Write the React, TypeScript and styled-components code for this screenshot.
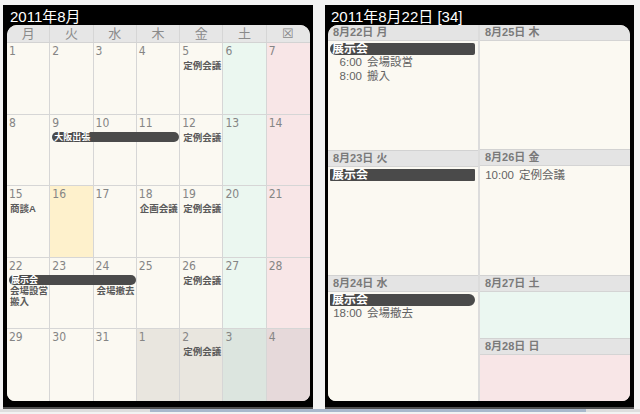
import React from "react";
import styled, { createGlobalStyle } from "styled-components";

const GlobalStyle = createGlobalStyle`
  html, body {
    margin: 0;
    padding: 0;
    background: #f3f3f3;
  }
  body {
    font-family: "Liberation Sans", "Noto Sans CJK JP", sans-serif;
  }
`;

const CJK = `"Liberation Sans", "Noto Sans CJK JP", sans-serif`;
const NUM = `"Liberation Sans Narrow", "DejaVu Sans Condensed", "Liberation Sans", sans-serif`;

const cream = "#fbf9f2";

const Screen = styled.div`
  width: 640px;
  height: 414px;
  display: flex;
  flex-direction: column;
  overflow: hidden;
`;

const Panels = styled.div`
  display: flex;
  gap: 12px;
  padding: 5px 6px 0 3px;
`;

const Panel = styled.section<{ $w: number; $left: number; $right: number }>`
  width: ${(p) => p.$w}px;
  height: 404px;
  box-sizing: border-box;
  background: #000;
  padding: 0 ${(p) => p.$right}px 6px ${(p) => p.$left}px;
  border-bottom: 2px solid #505050;
  display: flex;
  flex-direction: column;
`;

const Title = styled.h1`
  margin: 0;
  height: 20px;
  box-sizing: border-box;
  padding: 3px 0 0 3px;
  line-height: 17px;
  font-size: 15px;
  font-weight: normal;
  color: #fff;
  font-family: ${CJK};
  white-space: nowrap;
`;

const Sheet = styled.div`
  flex: 1;
  background: ${cream};
  border-radius: 10px 10px 8px 8px;
  overflow: hidden;
  display: flex;
  flex-direction: column;
`;

/* ---------- month view ---------- */

const WeekHeader = styled.div`
  display: grid;
  grid-template-columns: repeat(7, 1fr);
  height: 18px;
  background: #e6e6e6;
  border-bottom: 1px solid #d3d3d3;
  box-sizing: border-box;
`;

const DayName = styled.div<{ $last?: boolean }>`
  text-align: center;
  font-size: 13px;
  line-height: 17px;
  color: #8a8a8a;
  font-family: ${CJK};
  border-right: ${(p) => (p.$last ? "none" : "1px solid #d6d6d6")};
`;

const Week = styled.div<{ $last?: boolean }>`
  display: grid;
  grid-template-columns: repeat(7, 1fr);
  grid-template-rows: 17px 10px auto 1fr;
  height: 72px;
  box-sizing: border-box;
  border-bottom: ${(p) => (p.$last ? "none" : "1px solid #d6d6d6")};
`;

const DayCell = styled.div<{ $col: number; $bg: string }>`
  grid-column: ${(p) => p.$col};
  grid-row: 1 / -1;
  background: ${(p) => p.$bg};
  border-right: ${(p) => (p.$col === 7 ? "none" : "1px solid #d6d6d6")};
`;

const DateNum = styled.div<{ $col: number }>`
  grid-column: ${(p) => p.$col};
  grid-row: 1;
  padding: 2px 0 0 2px;
  font-size: 12px;
  line-height: 12px;
  color: #858585;
  font-family: ${NUM};
`;

const Bar = styled.div<{ $col: number; $span: number }>`
  grid-column: ${(p) => p.$col} / span ${(p) => p.$span};
  grid-row: 2;
  height: 10px;
  margin: 0 1px 0 2px;
  padding-left: 2px;
  border-radius: 5px;
  background: #4b4b4b;
  color: #fff;
  font-size: 9px;
  font-weight: bold;
  line-height: 10px;
  font-family: ${CJK};
  white-space: nowrap;
`;

const Item = styled.div<{ $col: number; $row: number }>`
  grid-column: ${(p) => p.$col};
  grid-row: ${(p) => p.$row};
  padding-left: 3px;
  font-size: 9.5px;
  line-height: 11px;
  font-weight: bold;
  color: #5a5a5a;
  font-family: ${CJK};
  white-space: pre;
`;

type MonthEvent =
  | { kind: "bar"; col: number; span: number; text: string }
  | { kind: "item"; col: number; row: number; text: string };

const dayNames = ["月", "火", "水", "木", "金", "土", "☒"];

const weeks: number[][] = [
  [1, 2, 3, 4, 5, 6, 7],
  [8, 9, 10, 11, 12, 13, 14],
  [15, 16, 17, 18, 19, 20, 21],
  [22, 23, 24, 25, 26, 27, 28],
  [29, 30, 31, 1, 2, 3, 4],
];

const weekEvents: MonthEvent[][] = [
  [{ kind: "item", col: 5, row: 2, text: "定例会議" }],
  [
    { kind: "bar", col: 2, span: 3, text: "大阪出張" },
    { kind: "item", col: 5, row: 2, text: "定例会議" },
  ],
  [
    { kind: "item", col: 1, row: 2, text: "商談A" },
    { kind: "item", col: 4, row: 2, text: "企画会議" },
    { kind: "item", col: 5, row: 2, text: "定例会議" },
  ],
  [
    { kind: "bar", col: 1, span: 3, text: "展示会" },
    { kind: "item", col: 1, row: 3, text: "会場設営\n搬入" },
    { kind: "item", col: 3, row: 3, text: "会場撤去" },
    { kind: "item", col: 5, row: 2, text: "定例会議" },
  ],
  [{ kind: "item", col: 5, row: 2, text: "定例会議" }],
];

function cellColor(week: number, col: number, day: number) {
  const nextMonth = week === 4 && day < 10;
  if (week === 2 && day === 16) return "#fef1cc";
  if (col === 6) return nextMonth ? "#dce5df" : "#ebf7f0";
  if (col === 7) return nextMonth ? "#e6d9da" : "#f8e6e7";
  return nextMonth ? "#e9e6df" : cream;
}

function MonthView() {
  return (
    <Sheet>
      <WeekHeader>
        {dayNames.map((d, i) => (
          <DayName key={d} $last={i === 6}>
            {d}
          </DayName>
        ))}
      </WeekHeader>
      {weeks.map((days, w) => (
        <Week key={w} $last={w === weeks.length - 1}>
          {days.map((day, i) => (
            <DayCell key={`bg${i}`} $col={i + 1} $bg={cellColor(w, i + 1, day)} />
          ))}
          {days.map((day, i) => (
            <DateNum key={`n${i}`} $col={i + 1}>
              {day}
            </DateNum>
          ))}
          {weekEvents[w].map((ev, k) =>
            ev.kind === "bar" ? (
              <Bar key={k} $col={ev.col} $span={ev.span}>
                {ev.text}
              </Bar>
            ) : (
              <Item key={k} $col={ev.col} $row={ev.row}>
                {ev.text}
              </Item>
            )
          )}
        </Week>
      ))}
    </Sheet>
  );
}

/* ---------- week view ---------- */

const WeekBody = styled.div`
  flex: 1;
  display: flex;
`;

const DayColumn = styled.div<{ $divider?: boolean }>`
  flex: 1;
  display: flex;
  flex-direction: column;
  border-right: ${(p) => (p.$divider ? "2px solid #dcdcdc" : "none")};
`;

const Section = styled.div<{ $grow: number; $first?: boolean }>`
  flex: ${(p) => p.$grow} 1 0;
  display: flex;
  flex-direction: column;
  border-top: ${(p) => (p.$first ? "none" : "1px solid #d2d2d2")};
`;

const SectionHead = styled.div`
  height: 16px;
  box-sizing: border-box;
  background: #e4e4e4;
  border-bottom: 1px solid #d4d4d4;
  padding-left: 5px;
  font-size: 11px;
  line-height: 15px;
  font-weight: bold;
  color: #7a7a7a;
  font-family: ${CJK};
`;

const SectionBody = styled.div<{ $bg: string }>`
  flex: 1;
  background: ${(p) => p.$bg};
  padding-top: 2px;
`;

const DayBar = styled.div<{ $round: "left" | "right" | "none" }>`
  height: 12px;
  margin: 0 3px 0 2px;
  padding-left: 2px;
  background: #4a4a4a;
  color: #fff;
  font-size: 12px;
  line-height: 12px;
  font-weight: bold;
  font-family: ${CJK};
  border-radius: ${(p) =>
    p.$round === "left" ? "6px 2px 2px 6px" : p.$round === "right" ? "1px 6px 6px 1px" : "1px"};
`;

const Entry = styled.div`
  padding-left: 5px;
  font-size: 11.5px;
  line-height: 14px;
  color: #646464;
  font-family: ${CJK};
  white-space: nowrap;
`;

const Time = styled.span`
  display: inline-block;
  min-width: 29px;
  margin-right: 5px;
  text-align: right;
`;

type DayInfo = {
  label: string;
  grow: number;
  bg: string;
  bar?: { text: string; round: "left" | "right" | "none" };
  entries: { time: string; text: string }[];
};

const leftDays: DayInfo[] = [
  {
    label: "8月22日 月",
    grow: 1,
    bg: cream,
    bar: { text: "展示会", round: "left" },
    entries: [
      { time: "6:00", text: "会場設営" },
      { time: "8:00", text: "搬入" },
    ],
  },
  { label: "8月23日 火", grow: 1, bg: cream, bar: { text: "展示会", round: "none" }, entries: [] },
  {
    label: "8月24日 水",
    grow: 1,
    bg: cream,
    bar: { text: "展示会", round: "right" },
    entries: [{ time: "18:00", text: "会場撤去" }],
  },
];

const rightDays: DayInfo[] = [
  { label: "8月25日 木", grow: 2, bg: cream, entries: [] },
  { label: "8月26日 金", grow: 2, bg: cream, entries: [{ time: "10:00", text: "定例会議" }] },
  { label: "8月27日 土", grow: 1, bg: "#ebf7f1", entries: [] },
  { label: "8月28日 日", grow: 1, bg: "#f8e6e7", entries: [] },
];

function DayList({ days, divider }: { days: DayInfo[]; divider?: boolean }) {
  return (
    <DayColumn $divider={divider}>
      {days.map((d, i) => (
        <Section key={d.label} $grow={d.grow} $first={i === 0}>
          <SectionHead>{d.label}</SectionHead>
          <SectionBody $bg={d.bg}>
            {d.bar && <DayBar $round={d.bar.round}>{d.bar.text}</DayBar>}
            {d.entries.map((e) => (
              <Entry key={e.time}>
                <Time>{e.time}</Time>
                {e.text}
              </Entry>
            ))}
          </SectionBody>
        </Section>
      ))}
    </DayColumn>
  );
}

const Footer = styled.div`
  height: 3px;
  background: #dedede;
  display: flex;
`;

const FooterTab = styled.div`
  margin-left: 150px;
  width: 436px;
  background: #a9b8cc;
`;

export default function App() {
  return (
    <Screen>
      <GlobalStyle />
      <Panels>
        <Panel $w={310} $left={4} $right={3}>
          <Title>2011年8月</Title>
          <MonthView />
        </Panel>
        <Panel $w={309} $left={3} $right={4}>
          <Title>2011年8月22日 [34]</Title>
          <Sheet>
            <WeekBody>
              <DayList days={leftDays} divider />
              <DayList days={rightDays} />
            </WeekBody>
          </Sheet>
        </Panel>
      </Panels>
      <Footer>
        <FooterTab />
      </Footer>
    </Screen>
  );
}
